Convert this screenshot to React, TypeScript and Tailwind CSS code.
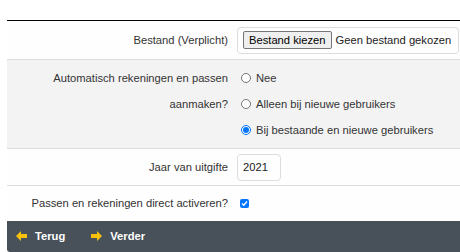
import React from "react";

const Radio = ({ checked }: { checked?: boolean }) => (
  <span
    className={
      checked
        ? "w-[10px] h-[10px] rounded-full border border-[#0075ff] bg-white flex items-center justify-center"
        : "w-[10px] h-[10px] rounded-full border border-[#767676] bg-white"
    }
  >
    {checked && <span className="w-[6px] h-[6px] rounded-full bg-[#0075ff]" />}
  </span>
);

const Arrow = ({ dir }: { dir: "left" | "right" }) => (
  <svg width="11" height="10" viewBox="0 0 11 10" className={dir === "left" ? "" : "rotate-180"}>
    <path d="M0 5 L5 0 L5 3 L11 3 L11 7 L5 7 L5 10 Z" fill="#f7c10e" />
  </svg>
);

const Label = ({ children }: { children: React.ReactNode }) => (
  <div className="w-[230px] pr-[9px] text-right">{children}</div>
);

export default function App() {
  const options = ["Nee", "Alleen bij nieuwe gebruikers", "Bij bestaande en nieuwe gebruikers"];

  return (
    <div className="w-[460px] h-[252px] bg-white pl-[7px] pt-[20px] font-['Liberation_Sans',Arial,sans-serif] text-[11.2px] text-[#333]">
      <div className="border-t border-black">
        {/* bestand */}
        <div className="flex items-center h-[39px] border-b border-[#ddd] bg-[#fefefe]">
          <Label>Bestand (Verplicht)</Label>
          <div className="w-[222px] h-[27px] border border-[#ddd] rounded-[4px] flex items-center pl-[5px] gap-[4px] text-[#222]">
            <span className="h-[18px] px-[5px] flex items-center border border-[#767676] bg-[#efefef] rounded-[2px] text-black">
              Bestand kiezen
            </span>
            <span>Geen bestand gekozen</span>
          </div>
        </div>

        {/* automatisch */}
        <div className="flex border-b border-[#ddd] bg-[#f3f3f3] py-[5px]">
          <div className="w-[230px] pr-[9px] text-right leading-[26px]">
            Automatisch rekeningen en passen
            <br />
            aanmaken?
          </div>
          <div className="flex flex-col">
            {options.map((o, i) => (
              <div key={i} className="h-[26px] flex items-center gap-[5px] pl-[4px]">
                <Radio checked={i === 2} />
                <span>{o}</span>
              </div>
            ))}
          </div>
        </div>

        {/* jaar */}
        <div className="flex items-center h-[37px] border-b border-[#ddd] bg-[#fefefe]">
          <Label>Jaar van uitgifte</Label>
          <div className="w-[44px] h-[27px] border border-[#ddd] rounded-[4px] flex items-center pl-[5px] text-[#222]">
            2021
          </div>
        </div>

        {/* activeren */}
        <div className="flex items-center h-[35px] bg-[#fefefe]">
          <Label>Passen en rekeningen direct activeren?</Label>
          <span className="ml-[3px] w-[9px] h-[9px] rounded-[2px] bg-[#0075ff] flex items-center justify-center">
            <svg width="7" height="7" viewBox="0 0 7 7">
              <path d="M1 3.6 L2.8 5.3 L6 1.5" stroke="white" strokeWidth="1.4" fill="none" />
            </svg>
          </span>
        </div>
      </div>

      {/* footer */}
      <div className="h-[31px] bg-[#48515a] rounded-bl-[3px] flex items-center pl-[9px] gap-[26px] text-white font-bold">
        <div className="flex items-center gap-[8px]">
          <Arrow dir="left" />
          <span>Terug</span>
        </div>
        <div className="flex items-center gap-[8px]">
          <Arrow dir="right" />
          <span>Verder</span>
        </div>
      </div>
    </div>
  );
}
